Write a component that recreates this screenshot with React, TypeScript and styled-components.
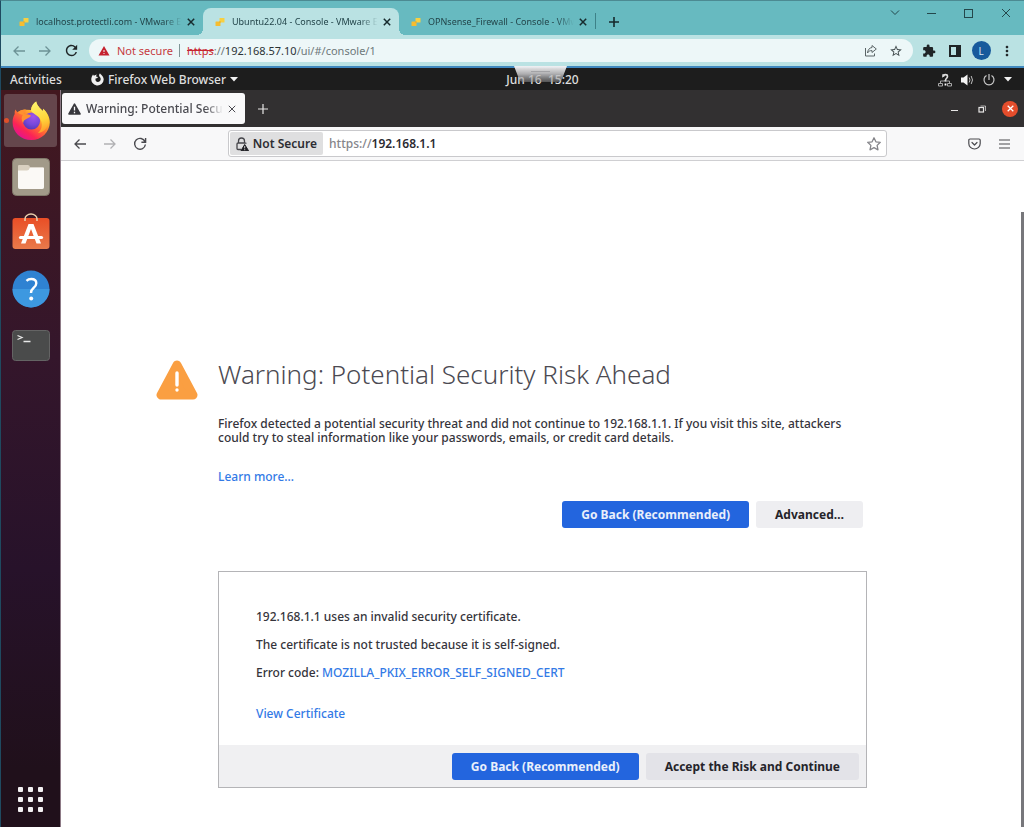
import React from "react";
import styled, { createGlobalStyle, css } from "styled-components";
import { MdExtension, MdMoreVert, MdRefresh, MdStarBorder, MdWarning } from "react-icons/md";

const GlobalStyle = createGlobalStyle`
  *, *::before, *::after { box-sizing: border-box; }
  body { margin: 0; font-family: "Noto Sans", "Open Sans", sans-serif; font-size: 12px; }
  h1, p { margin: 0; }
  button, input { font: inherit; color: inherit; margin: 0; padding: 0; border: 0; background: none; }
  svg { display: block; flex: none; }
`;

const Screen = styled.div`
  display: flex;
  flex-direction: column;
  min-height: 100vh;
  border-top: 1px solid #4c8a92;
  border-left: 1px solid #1f4a60;
`;

/* Host browser */

const TabStrip = styled.div`
  display: flex;
  height: 34px;
  padding-left: 6px;
  background: #67bac0;
`;

const HostTab = styled.div<{ $active?: boolean }>`
  position: relative;
  display: flex;
  align-items: center;
  width: 196px;
  height: 27px;
  margin-top: 7px;
  padding: 0 4px 0 12px;
  gap: 7px;
  border-radius: 8px 8px 0 0;
  color: #23454a;
  font-size: 9px;
  ${(p) =>
    p.$active &&
    css`
      background: #bae2e3;
      &::before,
      &::after {
        content: "";
        position: absolute;
        bottom: 0;
        width: 6px;
        height: 6px;
      }
      &::before {
        left: -6px;
        background: radial-gradient(circle at 0 0, transparent 6px, #bae2e3 6px);
      }
      &::after {
        right: -6px;
        background: radial-gradient(circle at 100% 0, transparent 6px, #bae2e3 6px);
      }
    `}
`;

const TabTitle = styled.span`
  flex: 1;
  min-width: 0;
  overflow: hidden;
  white-space: nowrap;
  mask-image: linear-gradient(to right, #000 calc(100% - 18px), transparent);
`;

const TabClose = styled.button`
  display: grid;
  place-items: center;
  width: 16px;
  height: 16px;
  margin-left: -6px;
  color: #172b2e;
`;

const TabDivider = styled.span`
  width: 1px;
  height: 16px;
  margin-top: 12px;
  background: #3d8188;
`;

const NewHostTab = styled.button`
  display: grid;
  place-items: center;
  width: 36px;
  height: 27px;
  margin-top: 7px;
  color: #16282b;
`;

const WindowControls = styled.div`
  display: flex;
  height: 24px;
  margin-left: auto;
`;

const WindowButton = styled.button`
  display: grid;
  place-items: center;
  width: 37px;
  color: #24474b;
`;

const HostToolbar = styled.div`
  display: flex;
  align-items: center;
  height: 33px;
  padding: 0 4px 0 5px;
  background: #bae2e3;
  border-bottom: 2px solid #4189bf;
`;

const HostButton = styled.button<{ $muted?: boolean }>`
  display: grid;
  place-items: center;
  width: 26px;
  height: 26px;
  color: ${(p) => (p.$muted ? "#6d9296" : "#1f2527")};
`;

const HostAddress = styled.div`
  display: flex;
  align-items: center;
  flex: 1;
  min-width: 0;
  height: 23px;
  margin: 0 3px 0 5px;
  padding: 0 4px 0 9px;
  border-radius: 12px;
  background: #edf7f8;
  color: #6d787a;
  font-size: 11px;
  line-height: 16px;
`;

const DangerLabel = styled.span`
  padding: 0 6px 0 7px;
  margin-right: 7px;
  border-right: 1px solid #7f9597;
  line-height: 13px;
  color: #c53a3f;
`;

const Scheme = styled.s`
  color: #c8272f;
`;

const HostInput = styled.input`
  field-sizing: content;
  width: auto;
  height: 16px;
  color: #2b3335;
  outline: 0;
`;

const AddressActions = styled.div`
  display: flex;
  margin-left: auto;
`;

const Avatar = styled.span`
  display: grid;
  place-items: center;
  width: 19px;
  height: 19px;
  border-radius: 50%;
  background: #175a9c;
  color: #d8e6f2;
  font-size: 10px;
`;

/* Remote desktop */

const PanelBar = styled.header`
  position: relative;
  display: grid;
  grid-template-columns: 60px minmax(0, 1fr) auto minmax(0, 1fr);
  align-items: center;
  height: 22px;
  padding-top: 1px;
  background: #1d1d1d;
  color: #dedede;
  font-weight: 500;
  white-space: nowrap;
`;

const PanelButton = styled.button<{ $inset: number }>`
  display: flex;
  align-items: center;
  gap: 4px;
  padding-left: ${(p) => p.$inset}px;
  line-height: 20px;
`;

const Clock = styled.time`
  white-space: pre;
`;

const StatusMenu = styled.button`
  display: flex;
  align-items: center;
  justify-self: end;
  gap: 9px;
  padding-right: 12px;
`;

const ConsoleHandle = styled.svg`
  position: absolute;
  top: -2px;
  left: calc(50% + 1px);
`;

const Desktop = styled.div`
  display: flex;
  flex: 1;
`;

const Dock = styled.nav`
  display: flex;
  flex-direction: column;
  align-items: center;
  gap: 3px;
  width: 60px;
  padding: 4px 0 14px;
  border-right: 1px solid #8d7a86;
  background: linear-gradient(#43181f, #34162b 36%, #27122a 65%, #20101b 92%);
`;

const DockButton = styled.button<{ $active?: boolean; $last?: boolean }>`
  position: relative;
  display: grid;
  place-items: center;
  width: 53px;
  height: 53px;
  border-radius: 3px;
  background: ${(p) => (p.$active ? "#65464c" : "none")};
  ${(p) =>
    p.$active &&
    css`
      &::before {
        content: "";
        position: absolute;
        left: 0;
        width: 5px;
        height: 5px;
        border-radius: 50%;
        background: #e0502a;
      }
    `}
  ${(p) =>
    p.$last &&
    css`
      height: 28px;
      margin-top: auto;
    `}
`;

const FirefoxWindow = styled.div`
  display: flex;
  flex-direction: column;
  flex: 1;
  min-width: 0;
  background: #fff;
  color: #35343b;
  font-weight: 500;
`;

const TitleBar = styled.div`
  display: flex;
  align-items: center;
  height: 37px;
  padding: 0 6px 0 1px;
  background: #323031;
  color: #e8e6e6;
`;

const FirefoxTab = styled.div`
  display: flex;
  align-items: center;
  gap: 5px;
  width: 183px;
  height: 31px;
  padding: 0 5px 0 6px;
  border-radius: 3px;
  background: #f9f9fa;
  color: #4a4a50;
`;

const FirefoxTabClose = styled.button`
  display: grid;
  place-items: center;
  width: 16px;
  height: 16px;
  margin-left: -4px;
`;

const IconButton = styled.button<{ $size?: number; $muted?: boolean }>`
  display: grid;
  place-items: center;
  flex: none;
  width: ${(p) => p.$size ?? 30}px;
  height: ${(p) => p.$size ?? 30}px;
  opacity: ${(p) => (p.$muted ? 0.4 : 1)};
`;

const TitleButtons = styled.div`
  display: flex;
  align-items: center;
  gap: 12px;
  margin-left: auto;
`;

const CloseWindow = styled.button`
  display: grid;
  place-items: center;
  width: 16px;
  height: 16px;
  border-radius: 50%;
  background: #e44d2c;
  color: #fff;
`;

const NavBar = styled.div`
  display: flex;
  align-items: center;
  height: 34px;
  padding: 0 4px;
  border-bottom: 1px solid #cfcfd2;
  background: #f8f8f9;
  color: #4a4a4f;
`;

const Spring = styled.span`
  flex: 1;
`;

const UrlBar = styled.div`
  display: flex;
  align-items: center;
  flex: 9;
  height: 27px;
  padding: 1px;
  border: 1px solid #c9c9cc;
  border-radius: 3px;
  background: #fff;
  color: #85858a;
`;

const Identity = styled.button`
  display: flex;
  align-items: center;
  gap: 4px;
  height: 23px;
  margin-right: 6px;
  padding: 0 6px;
  border-radius: 2px;
  background: #dfdfe0;
  color: #2d2d33;
  font-weight: 600;
`;

const UrlInput = styled.input`
  flex: 1;
  min-width: 0;
  height: 20px;
  color: #2b2a31;
  font-weight: 600;
  outline: 0;
`;

const Page = styled.main`
  position: relative;
  display: grid;
  grid-template-columns: minmax(63px, 1fr) minmax(0, 649px) minmax(0, 1fr);
  align-content: start;
  flex: 1;
  padding: 198px 0 24px;
  line-height: 14px;
`;

const ScrollThumb = styled.span`
  position: absolute;
  top: 51px;
  right: 0;
  bottom: 0;
  width: 3px;
  background: #77777b;
`;

const WarningMark = styled.svg`
  justify-self: end;
  margin-right: 20px;
`;

const ErrorBody = styled.div`
  display: flex;
  flex-direction: column;
  align-items: flex-start;
`;

const Title = styled.h1`
  height: 42px;
  margin-bottom: 16px;
  color: #4b4a52;
  font-size: 26px;
  font-weight: 300;
  line-height: 30px;
`;

const Description = styled.p`
  max-width: 628px;
  margin-bottom: 25px;
`;

const Link = styled.a`
  color: #337ae6;
  text-decoration: none;
`;

const ButtonRow = styled.div<{ $footer?: boolean }>`
  display: flex;
  justify-content: flex-end;
  align-self: stretch;
  gap: 7px;
  padding: ${(p) => (p.$footer ? "8px 7px 7px" : "17px 4px 43px")};
  background: ${(p) => (p.$footer ? "#f0f0f2" : "none")};
`;

const ActionButton = styled.button<{ $kind: "primary" | "plain" | "shaded" }>`
  height: 27px;
  padding: 0 19px;
  border-radius: 3px;
  font-weight: 700;
  white-space: nowrap;
  ${(p) =>
    p.$kind === "primary"
      ? css`
          background: #2365de;
          color: #e9effb;
        `
      : css`
          background: ${p.$kind === "plain" ? "#eeeef1" : "#e3e3e8"};
          color: #25242a;
        `}
`;

const CertificateBox = styled.section`
  align-self: stretch;
  border: 1px solid #b4b4b7;
`;

const CertificateText = styled.div`
  display: flex;
  flex-direction: column;
  gap: 14px;
  padding: 38px 37px 24px;
`;

const ViewCertificate = styled(Link)`
  align-self: flex-start;
  margin-top: 13px;
`;

/* Drawings */

const VmwareMark = () => (
  <svg width="10" height="10" viewBox="0 0 10 10">
    <rect x="4.500" y="1" width="5" height="4.500" rx="0.500" fill="#f8d040" />
    <rect x="0.500" y="4.500" width="5" height="4.500" rx="0.500" fill="#f6bd30" />
    <rect x="4.500" y="4.500" width="1" height="1" fill="#dd9416" />
  </svg>
);

const Cross = ({ size, weight = 1 }: { size: number; weight?: number }) => (
  <svg width={size} height={size} viewBox="0 0 10 10" fill="none" stroke="currentColor" strokeWidth={(weight * 10) / size}>
    <path d="M1 1l8 8M9 1L1 9" />
  </svg>
);

const Plus = ({ size, weight }: { size: number; weight: number }) => (
  <svg width={size} height={size} viewBox="0 0 10 10" fill="none" stroke="currentColor" strokeWidth={weight}>
    <path d="M5 0v10M0 5h10" />
  </svg>
);

const Arrow = ({ back }: { back?: boolean }) => (
  <svg width="14" height="14" viewBox="0 0 14 14" fill="none" stroke="currentColor" strokeWidth="1.3">
    {back ? <path d="M13 7H2M6.500 2.500L2 7l4.500 4.500" /> : <path d="M1 7h11M7.500 2.500L12 7l-4.500 4.500" />}
  </svg>
);

const Reload = () => (
  <svg width="14" height="14" viewBox="0 0 14 14" fill="none" stroke="currentColor" strokeWidth="1.400">
    <path d="M12 4.600A5.400 5.400 0 1 0 12.400 7.500M12.600 1v4.200H8.400" />
  </svg>
);

const Share = () => (
  <svg width="13" height="13" viewBox="0 0 13 13" fill="none" stroke="#5b6567" strokeWidth="1">
    <path d="M1.500 4v8h9V9.500" />
    <path d="M8 1.500L12.300 5 8 8.500V6.600C5.800 6.500 4.400 7.300 3.500 9 3.700 6 5.300 3.800 8 3.500z" strokeLinejoin="round" />
  </svg>
);

const SidePanel = () => (
  <svg width="12" height="12" viewBox="0 0 12 12">
    <path fill="currentColor" fillRule="evenodd" d="M0 0h12v12H0zM2 2v8h5V2z" />
  </svg>
);

const SwirlIcon = () => (
  <svg width="13" height="13" viewBox="0 0 13 13">
    <path
      fill="#f0f0f0"
      fillRule="evenodd"
      d="M2 1.600l.9 1.200C4 2 5 1.600 6 1.500 5.300 2.200 5 2.800 5 3.500c1 .1 1.700.4 2 .9-.9.600-1.800.7-2.400 1.200C4 7.600 5.200 9 6.800 9c1.800 0 2.900-1.300 2.900-2.900 0-1.300-.7-2.100-1.500-2.800C8 2 8 1 9 .2c.3 1 3.700 2.600 3.700 6.300A6.200 6.200 0 1 1 .5 4.800C.8 3.400 1.500 2.600 2 1.600z"
    />
  </svg>
);

const NetworkIcon = () => (
  <svg width="14" height="14" viewBox="0 0 14 14" fill="none" stroke="#a8a8a8" strokeWidth="1">
    <path d="M4.500 4.500v-3h5M7 7v1M2.500 10V8h9v2" />
    <path d="M0.500 10.500h4v2.500h-4zM9.500 10.500h4v2.500h-4z" />
    <path d="M5.300 3.800C5.500 2.200 6.200 1.600 7.300 1.600c1.300 0 2.200.7 2.200 1.900 0 1.700-1.900 1.800-2 3.900v1.100" stroke="#dcdcdc" strokeWidth="1.600" />
    <path d="M6.600 10.500h1.800v2H6.600z" fill="#fff" stroke="none" />
  </svg>
);

const VolumeIcon = () => (
  <svg width="13" height="12" viewBox="0 0 13 12">
    <path fill="#f4f4f4" d="M0 3.500h2.500L6.500.5v11l-4-3H0z" />
    <path d="M8.200 3.500q1.600 2.500 0 5M10.200 2q2.600 4 0 8" stroke="#bdbdbd" fill="none" />
  </svg>
);

const PowerIcon = () => (
  <svg width="12" height="12" viewBox="0 0 12 12" fill="none" stroke="#c9c9c9" strokeWidth="1.200">
    <path d="M6 0v6M3.500 1.500a5 5 0 1 0 5 0" />
  </svg>
);

const Caret = () => (
  <svg width="8" height="5" viewBox="0 0 8 5">
    <path d="M0 0h8L4 4.500z" fill="#f2f2f2" />
  </svg>
);

const FirefoxLogo = () => (
  <svg width="40" height="40" viewBox="0 0 40 40">
    <defs>
      <linearGradient id="ffBody" x1="0.850" y1="0.100" x2="0.250" y2="0.950">
        <stop offset="0" stopColor="#fff14a" />
        <stop offset="0.300" stopColor="#ffbc2b" />
        <stop offset="0.550" stopColor="#ff6a33" />
        <stop offset="0.800" stopColor="#fb2455" />
        <stop offset="1" stopColor="#e6148c" />
      </linearGradient>
      <radialGradient id="ffGlobe" cx="0.600" cy="0.250" r="0.800">
        <stop offset="0" stopColor="#a155e8" />
        <stop offset="0.600" stopColor="#7447da" />
        <stop offset="1" stopColor="#5137b0" />
      </radialGradient>
      <linearGradient id="ffTail" x1="0.400" y1="0" x2="0.600" y2="1">
        <stop offset="0" stopColor="#fff36b" />
        <stop offset="0.600" stopColor="#ffd53a" />
        <stop offset="1" stopColor="#ff9a2a" />
      </linearGradient>
    </defs>
    <path
      fill="url(#ffBody)"
      d="M4.500 8.500c.5 1.200 1.200 2 2.100 2.800C9.800 9 12.500 8.300 15 8.700L20 9c.3-3.900 2.500-6.700 5.200-8.500.7 4.200 3.600 6.300 6.400 9.500.6-.5.600-1.300.4-2.300 4.100 3.400 6.900 8.500 6.800 13.800C38.500 31.300 30.500 39 20.500 39 9.800 39 1.600 31.200 1.600 21.200c0-3.500.8-6 2.100-8.300-.2-1.700.1-3.200.8-4.400z"
    />
    <circle cx="20.500" cy="20" r="8.600" fill="url(#ffGlobe)" />
    <path
      fill="#ff9130"
      d="M6.600 11.300c3-2.600 6-3 8.900-2.400-1.600 1.200-2.600 2.600-2.800 4 2.300.2 5 .2 7.300 1.600-.6 1.900-2.900 2.600-4.700 3.500-1.800.8-2.900 2.100-3.200 4-1.900-2.400-1.900-5.900-.2-8.200-2-.3-3.900-1-5.300-2.500z"
    />
    <path
      fill="url(#ffTail)"
      d="M25.200.5c.7 4.200 3.600 6.300 6.400 9.500.6-.5.600-1.300.4-2.300 4.500 4 6.500 9.500 5 15.300-1.500 5.500-5.500 8.500-10 9 3.500-3 4.700-7.500 3.300-11.500-1.300-3.700-4-5.500-6.800-7.500-2-1.300-3.500-2.600-3.500-4 .3-3.900 2.500-6.700 5.200-8.500z"
    />
  </svg>
);

const FilesLogo = () => (
  <svg width="38" height="38" viewBox="0 0 38 38">
    <rect x="0.500" y="0.500" width="37" height="37" rx="4" fill="#a29a89" stroke="#817a6b" />
    <path d="M6 8q0-1 1-1h9q2 0 2 2.500h13q1 0 1 1V29q0 2-2 2H8q-2 0-2-2z" fill="#d9d0c0" />
    <path d="M6 12.500h9q2 0 3-3h13q1 0 1 1V29q0 2-2 2H8q-2 0-2-2z" fill="#fbf9f6" />
  </svg>
);

const SoftwareLogo = () => (
  <svg width="38" height="40" viewBox="0 0 38 40">
    <defs>
      <linearGradient id="bag" x1="0" y1="0" x2="0" y2="1">
        <stop offset="0" stopColor="#e94e26" />
        <stop offset="1" stopColor="#ea7a4b" />
      </linearGradient>
    </defs>
    <rect x="0.500" y="5" width="37" height="31" rx="3" fill="url(#bag)" />
    <path d="M13 8V6a6 5 0 0 1 12 0v2" fill="none" stroke="#ead0ad" strokeWidth="1.500" />
    <path d="M16.500 11h5L29 30.500h-4.500L19 16l-5.500 14.500H9z" fill="#fff" />
    <path d="M8.500 24.500h21" stroke="#fff" strokeWidth="3.200" strokeLinecap="round" />
  </svg>
);

const HelpLogo = () => (
  <svg width="38" height="38" viewBox="0 0 38 38">
    <circle cx="19" cy="19" r="18.500" fill="#2f82d2" />
    <path d="M.5 19h37a18.500 18.500 0 0 1-37 0z" fill="#3d98e0" />
    <path d="M14.500 10.800q1.800-1.800 4.800-1.800 5 0 5 4.300 0 2.600-2.800 4.700-2.500 1.900-2.500 5" fill="none" stroke="#fff" strokeWidth="2.400" />
    <circle cx="19.200" cy="28.500" r="2" fill="#fff" />
  </svg>
);

const TerminalLogo = () => (
  <svg width="38" height="32" viewBox="0 0 38 32">
    <rect x="0.500" y="1.500" width="37" height="30" rx="3" fill="#4a4b4b" stroke="#646464" />
    <path d="M5.500 6.500l4.500 2-4.500 2M11.500 12.500h7" fill="none" stroke="#e8e8e8" strokeWidth="1.300" />
  </svg>
);

const AppGrid = () => (
  <svg width="27" height="27" viewBox="0 0 27 27" fill="#f3f0f2">
    {[0, 10, 20].map((y) => [0, 10, 20].map((x) => <rect key={`${x}-${y}`} x={x + 1} y={y + 1} width="5" height="5" rx="1" />))}
  </svg>
);

const WarningGlyph = () => (
  <svg width="13" height="12" viewBox="0 0 13 12">
    <path d="M6.500 1.200L12 11H1z" fill="#38383d" stroke="#38383d" strokeWidth="1.600" strokeLinejoin="round" />
    <path d="M6.500 3.800v3.700M6.500 8.700v1.500" stroke="#f9f9fa" strokeWidth="1.300" />
  </svg>
);

const LockWarning = () => (
  <svg width="13" height="14" viewBox="0 0 13 14">
    <path d="M2.500 6V4a3 3 0 0 1 6 0v2M5 12.500H2q-1 0-1-1V7q0-1 1-1h7q1 0 1 .8" fill="none" stroke="#45454a" strokeWidth="1.300" />
    <path d="M8.700 7.500l3.800 6.200H5z" fill="#1f1f24" stroke="#1f1f24" strokeLinejoin="round" />
    <path d="M8.700 9v2.400M8.700 12.200v1" stroke="#dfdfe0" strokeWidth="0.900" />
  </svg>
);

const BookmarkStar = () => (
  <svg width="14" height="14" viewBox="0 0 14 14" fill="none" stroke="currentColor" strokeWidth="1.300" strokeLinejoin="round">
    <path d="M7 .8l1.900 4 4.400.5-3.200 3.100.9 4.400L7 10.700l-4 2.100.9-4.400L.7 5.300l4.400-.5z" />
  </svg>
);

const Pocket = () => (
  <svg width="13" height="12" viewBox="0 0 13 12" fill="none" stroke="currentColor" strokeWidth="1.200" strokeLinecap="round" strokeLinejoin="round">
    <path d="M2 1h9q1.200 0 1.200 1.200V5.500a5.700 5.500 0 0 1-11.400 0V2.200Q.8 1 2 1zM4 4.500L6.500 7 9 4.500" />
  </svg>
);

const MenuLines = () => (
  <svg width="11" height="10" viewBox="0 0 11 10" stroke="currentColor" strokeWidth="1.200">
    <path d="M0 1h11M0 5h11M0 9h11" />
  </svg>
);

const hostTabs = [
  { title: "localhost.protectli.com - VMware ESXi", active: false },
  { title: "Ubuntu22.04 - Console - VMware ESXi", active: true },
  { title: "OPNsense_Firewall - Console - VMware ESXi", active: false },
];

const dockApps = [
  { name: "Firefox", icon: <FirefoxLogo />, active: true },
  { name: "Files", icon: <FilesLogo />, active: false },
  { name: "Software", icon: <SoftwareLogo />, active: false },
  { name: "Help", icon: <HelpLogo />, active: false },
  { name: "Terminal", icon: <TerminalLogo />, active: false },
];

const HostBrowser = () => (
  <>
    <TabStrip>
      {hostTabs.map((tab) => (
        <HostTab key={tab.title} $active={tab.active}>
          <VmwareMark />
          <TabTitle>{tab.title}</TabTitle>
          <TabClose aria-label="Close tab">
            <Cross size={8} weight={1.5} />
          </TabClose>
        </HostTab>
      ))}
      <TabDivider />
      <NewHostTab aria-label="New tab">
        <Plus size={10} weight={1.6} />
      </NewHostTab>
      <WindowControls>
        <WindowButton aria-label="Search tabs">
          <svg width="10" height="6" viewBox="0 0 10 6" fill="none" stroke="currentColor">
            <path d="M1 .5l4 4 4-4" />
          </svg>
        </WindowButton>
        <WindowButton aria-label="Minimize">
          <svg width="9" height="1" viewBox="0 0 9 1">
            <rect width="9" height="1" fill="currentColor" />
          </svg>
        </WindowButton>
        <WindowButton aria-label="Maximize">
          <svg width="9" height="9" viewBox="0 0 9 9" fill="none" stroke="currentColor">
            <rect x="0.500" y="0.500" width="8" height="8" />
          </svg>
        </WindowButton>
        <WindowButton aria-label="Close">
          <Cross size={10} />
        </WindowButton>
      </WindowControls>
    </TabStrip>
    <HostToolbar>
      <HostButton aria-label="Back" $muted>
        <Arrow back />
      </HostButton>
      <HostButton aria-label="Forward" $muted>
        <Arrow />
      </HostButton>
      <HostButton aria-label="Reload">
        <MdRefresh size={17} />
      </HostButton>
      <HostAddress>
        <MdWarning size={12} color="#c5222f" />
        <DangerLabel>Not secure</DangerLabel>
        <Scheme>https</Scheme>
        <span>://</span>
        <HostInput aria-label="Address" defaultValue="192.168.57.10" />
        <span>/ui/#/console/1</span>
        <AddressActions>
          <HostButton aria-label="Share">
            <Share />
          </HostButton>
          <HostButton aria-label="Bookmark">
            <MdStarBorder size={14} color="#454f51" />
          </HostButton>
        </AddressActions>
      </HostAddress>
      <HostButton aria-label="Extensions">
        <MdExtension size={14} />
      </HostButton>
      <HostButton aria-label="Side panel">
        <SidePanel />
      </HostButton>
      <HostButton aria-label="Profile">
        <Avatar>L</Avatar>
      </HostButton>
      <HostButton aria-label="Menu">
        <MdMoreVert size={16} />
      </HostButton>
    </HostToolbar>
  </>
);

const DesktopPanel = () => (
  <PanelBar>
    <PanelButton $inset={9}>Activities</PanelButton>
    <PanelButton $inset={30}>
      <SwirlIcon />
      Firefox Web Browser
      <Caret />
    </PanelButton>
    <Clock>{"Jun 16  15:20"}</Clock>
    <StatusMenu aria-label="System menu">
      <NetworkIcon />
      <VolumeIcon />
      <PowerIcon />
      <Caret />
    </StatusMenu>
    <ConsoleHandle width="53" height="17" viewBox="0 0 53 17">
      <defs>
        <linearGradient id="handle" x1="0" y1="0" x2="0" y2="1">
          <stop offset="0" stopColor="#f1f1f3" />
          <stop offset="0.500" stopColor="#c8c8ca" stopOpacity="0.850" />
          <stop offset="1" stopColor="#8c8c8e" stopOpacity="0.500" />
        </linearGradient>
      </defs>
      <path d="M0 0h53l-5 13q-1 3-4 3H9q-3 0-4-3z" fill="url(#handle)" />
      <path d="M17 5.500h19M17 8.500h19" stroke="#a3a3a6" />
    </ConsoleHandle>
  </PanelBar>
);

const WarningPage = () => (
  <Page>
    <WarningMark width="42" height="42" viewBox="0 0 42 42">
      <path d="M21 6L5 36h32z" fill="#fa9f42" stroke="#fa9f42" strokeWidth="9" strokeLinejoin="round" />
      <path d="M21 14v12M21 31v.1" stroke="#fff" strokeWidth="3.400" strokeLinecap="round" />
    </WarningMark>
    <ErrorBody>
      <Title>Warning: Potential Security Risk Ahead</Title>
      <Description>
        Firefox detected a potential security threat and did not continue to 192.168.1.1. If you visit this site,
        attackers could try to steal information like your passwords, emails, or credit card details.
      </Description>
      <Link href="#learn">Learn more…</Link>
      <ButtonRow>
        <ActionButton $kind="primary">Go Back (Recommended)</ActionButton>
        <ActionButton $kind="plain">Advanced…</ActionButton>
      </ButtonRow>
      <CertificateBox>
        <CertificateText>
          <p>192.168.1.1 uses an invalid security certificate.</p>
          <p>The certificate is not trusted because it is self-signed.</p>
          <p>
            Error code: <Link href="#code">MOZILLA_PKIX_ERROR_SELF_SIGNED_CERT</Link>
          </p>
          <ViewCertificate href="#certificate">View Certificate</ViewCertificate>
        </CertificateText>
        <ButtonRow $footer>
          <ActionButton $kind="primary">Go Back (Recommended)</ActionButton>
          <ActionButton $kind="shaded">Accept the Risk and Continue</ActionButton>
        </ButtonRow>
      </CertificateBox>
    </ErrorBody>
    <ScrollThumb />
  </Page>
);

export default function App() {
  return (
    <Screen>
      <GlobalStyle />
      <HostBrowser />
      <DesktopPanel />
      <Desktop>
        <Dock aria-label="Dock">
          {dockApps.map((app) => (
            <DockButton key={app.name} aria-label={app.name} $active={app.active}>
              {app.icon}
            </DockButton>
          ))}
          <DockButton aria-label="Show applications" $last>
            <AppGrid />
          </DockButton>
        </Dock>
        <FirefoxWindow>
          <TitleBar>
            <FirefoxTab>
              <WarningGlyph />
              <TabTitle>Warning: Potential Security Risk Ahead</TabTitle>
              <FirefoxTabClose aria-label="Close tab">
                <Cross size={8} />
              </FirefoxTabClose>
            </FirefoxTab>
            <IconButton aria-label="New tab" $size={36}>
              <Plus size={10} weight={1.2} />
            </IconButton>
            <TitleButtons>
              <IconButton aria-label="Minimize" $size={16}>
                <svg width="7" height="7" viewBox="0 0 7 7">
                  <rect y="5" width="7" height="1" fill="currentColor" />
                </svg>
              </IconButton>
              <IconButton aria-label="Restore" $size={16}>
                <svg width="8" height="8" viewBox="0 0 8 8" fill="none" stroke="currentColor">
                  <rect x="1" y="2.500" width="4.500" height="4.500" strokeWidth="1.200" />
                  <path d="M2.500 1h5v5" strokeWidth="0.700" />
                </svg>
              </IconButton>
              <CloseWindow aria-label="Close">
                <Cross size={7} weight={1.3} />
              </CloseWindow>
            </TitleButtons>
          </TitleBar>
          <NavBar>
            <IconButton aria-label="Back">
              <Arrow back />
            </IconButton>
            <IconButton aria-label="Forward" $muted>
              <Arrow />
            </IconButton>
            <IconButton aria-label="Reload">
              <Reload />
            </IconButton>
            <Spring />
            <UrlBar>
              <Identity>
                <LockWarning />
                Not Secure
              </Identity>
              <span>https://</span>
              <UrlInput aria-label="Address" defaultValue="192.168.1.1" />
              <IconButton aria-label="Bookmark" $size={22}>
                <BookmarkStar />
              </IconButton>
            </UrlBar>
            <Spring />
            <IconButton aria-label="Save to Pocket">
              <Pocket />
            </IconButton>
            <IconButton aria-label="Menu">
              <MenuLines />
            </IconButton>
          </NavBar>
          <WarningPage />
        </FirefoxWindow>
      </Desktop>
    </Screen>
  );
}
